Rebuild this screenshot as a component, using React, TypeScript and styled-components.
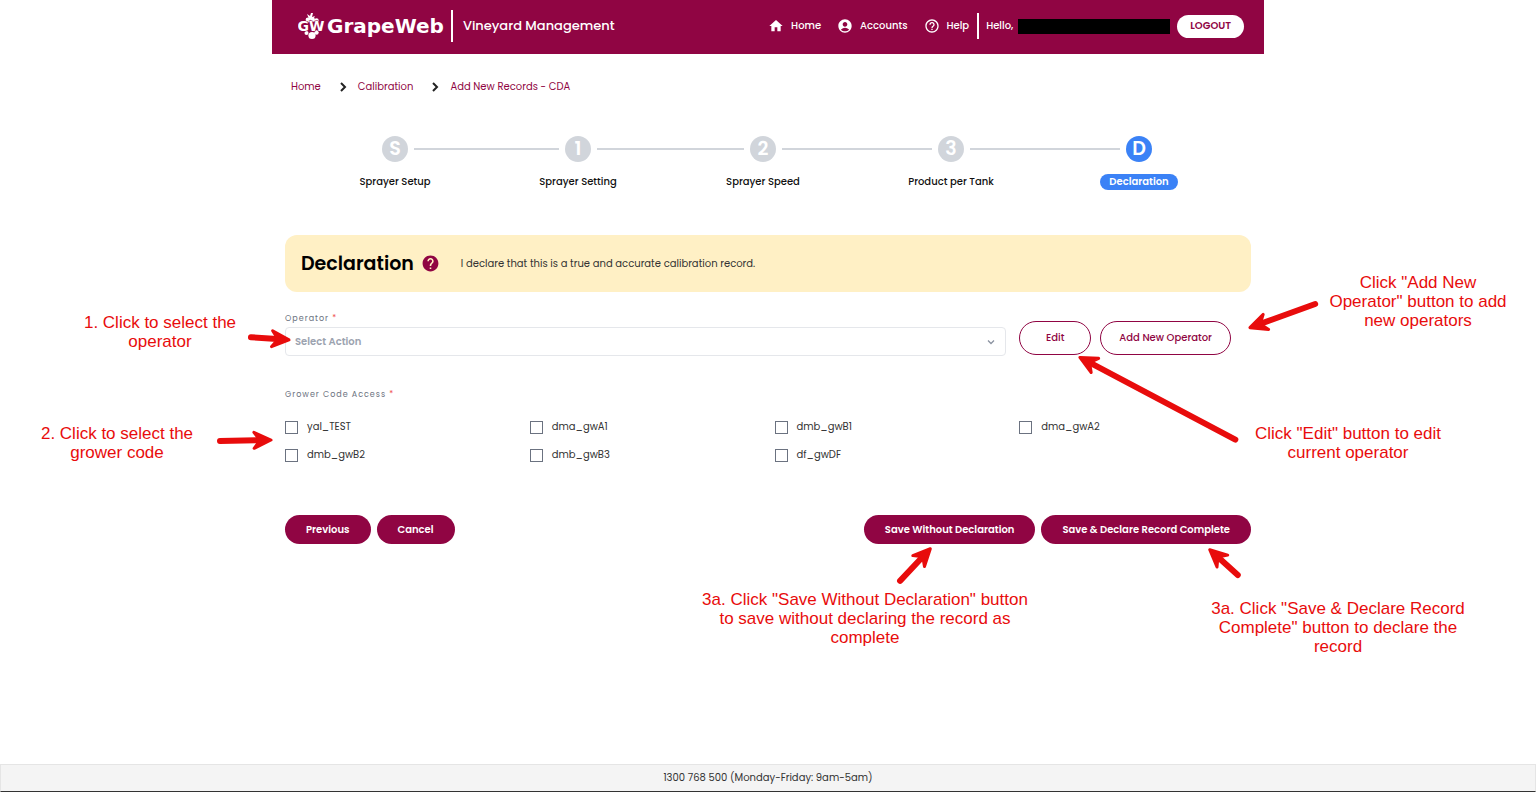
import React from "react";
import styled, { createGlobalStyle } from "styled-components";
import { MdAccountCircle, MdHelp, MdHelpOutline, MdHome } from "react-icons/md";

const wine = "#900543";
const blue = "#3b82f6";
const grey = "#d1d5db";
const red = "#e80c0c";

const GlobalStyle = createGlobalStyle`
  *, *::before, *::after { box-sizing: border-box; }
  body {
    margin: 0;
    background: #fff;
    color: #333;
    font-family: Poppins, Inter, "Liberation Sans", sans-serif;
    font-size: 10px;
    line-height: 16px;
  }
  button, input, select { font: inherit; }
  h1, p, ol { margin: 0; padding: 0; }
  ol { list-style: none; }
`;

const Page = styled.div`
  min-height: 100vh;
  display: flex;
  flex-direction: column;
  overflow-x: hidden;
`;

const Shell = styled.div`
  position: relative;
  flex: 1;
  width: 100%;
  max-width: 992px;
  margin: 0 auto;
`;

const Header = styled.header`
  display: flex;
  align-items: center;
  justify-content: space-between;
  min-height: 54px;
  padding: 0 20px 2px 26px;
  background: ${wine};
  color: #fff;
`;

const Brand = styled.a`
  display: flex;
  align-items: center;
  color: inherit;
  text-decoration: none;
`;

const BrandName = styled.span`
  margin-left: 1px;
  font-family: "DejaVu Sans", Verdana, sans-serif;
  font-size: 20px;
  font-weight: 700;
  line-height: 32px;
`;

const Product = styled.span`
  margin-left: 7px;
  padding-left: 10px;
  border-left: 2px solid #fff;
  font-size: 13px;
  font-weight: 500;
  line-height: 32px;
`;

const Nav = styled.nav`
  display: flex;
  align-items: center;
`;

const NavLink = styled.a`
  display: flex;
  align-items: center;
  gap: 7px;
  margin-right: 16px;
  color: inherit;
  font-weight: 500;
  text-decoration: none;

  &:last-of-type { margin-right: 8px; }
`;

const Greeting = styled.span`
  padding-left: 7px;
  border-left: 2px solid #fff;
  font-weight: 500;
  line-height: 26px;
`;

const HiddenName = styled.span`
  width: 152px;
  height: 15px;
  margin: 0 7px 0 5px;
  background: #000;
`;

const Logout = styled.button`
  height: 23px;
  padding: 0 13px;
  border: 0;
  border-radius: 12px;
  background: #fff;
  color: ${wine};
  font-weight: 600;
`;

const Breadcrumbs = styled.nav`
  display: flex;
  align-items: center;
  gap: 11px;
  padding: 25px 19px 0;

  a { color: ${wine}; text-decoration: none; }
  svg { margin-left: 7px; }
`;

const Steps = styled.ol`
  display: flex;
  padding: 41px 112px 0 110px;
`;

const Step = styled.li`
  display: flex;
  flex-direction: column;
  align-items: center;
  gap: 12px;
  width: 26px;
`;

const StepMark = styled.span<{ $active?: boolean }>`
  width: 26px;
  height: 26px;
  border-radius: 13px;
  background: ${(p) => (p.$active ? blue : grey)};
  color: #fff;
  font-size: 19px;
  font-weight: 600;
  line-height: 26px;
  text-align: center;
`;

const StepLabel = styled.span<{ $active?: boolean }>`
  padding: 0 9px;
  border-radius: 8px;
  background: ${(p) => (p.$active ? blue : "transparent")};
  color: ${(p) => (p.$active ? "#fff" : "#111")};
  font-weight: ${(p) => (p.$active ? 600 : 500)};
  white-space: nowrap;
`;

const Connector = styled.li<{ $grow: number }>`
  flex: ${(p) => p.$grow} 1 0;
  height: 2px;
  margin: 12px 6px 0;
  background: ${grey};
`;

const Form = styled.form`
  padding: 0 13px;
`;

const Banner = styled.section`
  display: flex;
  align-items: center;
  min-height: 57px;
  margin-top: 45px;
  padding: 0 16px;
  border-radius: 12px;
  background: #fff0c5;
`;

const Title = styled.h1`
  color: #000;
  font-size: 19px;
  font-weight: 600;
  line-height: 28px;
`;

const HelpButton = styled.button`
  display: flex;
  margin: 0 21px 0 7px;
  padding: 0;
  border: 0;
  background: none;
  color: ${wine};
`;

const Columns = styled.div`
  display: grid;
  grid-template-columns: repeat(4, minmax(0, 1fr));
  gap: 12px 13px;
`;

const OperatorRow = styled(Columns)`
  margin-top: 21px;
`;

const Field = styled.div`
  grid-column: span 3;
`;

const caption = `
  display: block;
  padding: 0;
  color: #6b7280;
  font-size: 8px;
  letter-spacing: 1px;
  line-height: 12px;
`;

const FieldLabel = styled.label`
  ${caption}
  margin-bottom: 2px;
`;

const Required = styled.span`
  color: #f05252;
`;

const SelectBox = styled.div`
  position: relative;

  svg {
    position: absolute;
    top: 11px;
    right: 11px;
    pointer-events: none;
  }
`;

const Select = styled.select`
  display: block;
  appearance: none;
  width: 100%;
  height: 29px;
  padding: 0 9px;
  border: 1px solid #e5e7eb;
  border-radius: 4px;
  background: #fff;
  color: #9ca3af;
  font-weight: 600;
`;

const OperatorActions = styled.div`
  display: flex;
  align-items: center;
  gap: 9px;
  height: 44px;
  padding-top: 6px;
`;

const OutlineButton = styled.button`
  height: 34px;
  min-width: 72px;
  padding: 0 18px;
  border: 1px solid ${wine};
  border-radius: 17px;
  background: #fff;
  color: ${wine};
  font-weight: 500;
  white-space: nowrap;
`;

const Growers = styled.fieldset`
  margin: 32px 0 0;
  padding: 0;
  border: 0;

  legend { ${caption} margin-bottom: 18px; }
`;

const Grower = styled.label`
  display: flex;
  align-items: center;
  gap: 9px;
`;

const Checkbox = styled.input`
  appearance: none;
  width: 13px;
  height: 13px;
  margin: 0;
  border: 1px solid #6b7280;
  background: #fff;

  &:checked { background: ${wine}; }
`;

const Footer = styled.footer`
  padding: 5px;
  border: 1px solid #e5e5e5;
  border-bottom-color: #333;
  background: #f4f4f4;
  text-align: center;
`;

const Actions = styled.div`
  display: flex;
  gap: 6px;
  margin-top: 52px;
`;

const SolidButton = styled.button`
  height: 29px;
  padding: 0 21px;
  border: 0;
  border-radius: 15px;
  background: ${wine};
  color: #fff;
  font-weight: 600;
  white-space: nowrap;
`;

const Spacer = styled.span`
  flex: 1;
`;

const Arrows = styled.svg`
  position: absolute;
  top: 0;
  left: 0;
  overflow: visible;
  pointer-events: none;
`;

const Note = styled.p<{ $x: number; $y: number; $w: number }>`
  position: absolute;
  left: ${(p) => p.$x}px;
  top: ${(p) => p.$y}px;
  width: ${(p) => p.$w}px;
  color: ${red};
  font-family: "Liberation Sans", Arial, sans-serif;
  font-size: 17px;
  line-height: 19px;
  text-align: center;
  white-space: pre;
`;

function LogoMark() {
  return (
    <svg width="28" height="30" viewBox="0 0 28 30" fill="#fff" aria-hidden="true">
      <path d="M9 3l3 2 1-3 2 0-1 4 3-1-2 3h-4z" />
      <circle cx="10" cy="9" r="2.4" />
      <circle cx="14.5" cy="8.5" r="2.4" />
      <circle cx="18.5" cy="9.5" r="2.2" />
      <circle cx="8.5" cy="22" r="2" />
      <circle cx="18.5" cy="21.5" r="2.2" />
      <circle cx="14" cy="24.5" r="3.6" />
      <text
        x="13"
        y="20"
        fontFamily="DejaVu Sans, Verdana, sans-serif"
        fontSize="14"
        fontWeight="700"
        textAnchor="middle"
        stroke={wine}
        strokeWidth="1"
        paintOrder="stroke"
      >
        GW
      </text>
    </svg>
  );
}

function Chevron() {
  return (
    <svg width="8" height="10" viewBox="0 0 8 10" fill="none" stroke="#222" strokeWidth="2" aria-hidden="true">
      <path d="M2 1l4 4-4 4" />
    </svg>
  );
}

type ArrowProps = { from: [number, number]; to: [number, number] };

function Arrow({ from, to }: ArrowProps) {
  const dx = to[0] - from[0];
  const dy = to[1] - from[1];
  const length = Math.hypot(dx, dy);
  const angle = (Math.atan2(dy, dx) * 180) / Math.PI;
  return (
    <g
      transform={`translate(${to[0]} ${to[1]}) rotate(${angle})`}
      fill={red}
      stroke={red}
      strokeLinecap="round"
      strokeLinejoin="round"
    >
      <path d={`M${3 - length} 0H-9`} strokeWidth="6" />
      <path d="M-1 0L-18-8L-12 0L-18 8Z" strokeWidth="3" />
    </g>
  );
}

const steps = [
  { mark: "S", label: "Sprayer Setup", grow: 145 },
  { mark: "1", label: "Sprayer Setting", grow: 147 },
  { mark: "2", label: "Sprayer Speed", grow: 150 },
  { mark: "3", label: "Product per Tank", grow: 150 },
  { mark: "D", label: "Declaration", grow: 0 },
];

const growers = ["yal_TEST", "dma_gwA1", "dmb_gwB1", "dma_gwA2", "dmb_gwB2", "dmb_gwB3", "df_gwDF"];

const arrows: ArrowProps[] = [
  { from: [-24, 337], to: [18, 340] },
  { from: [-55, 441], to: [0, 440] },
  { from: [1046, 303], to: [977, 328] },
  { from: [966, 441], to: [807, 357] },
  { from: [626, 583], to: [659, 548] },
  { from: [968, 577], to: [937, 549] },
];

const notes = [
  { x: -198, y: 313, w: 172, text: "1. Click to select the\noperator" },
  { x: -241, y: 424, w: 172, text: "2. Click to select the\ngrower code" },
  { x: 1050, y: 273, w: 192, text: 'Click "Add New\nOperator" button to add\nnew operators' },
  { x: 976, y: 424, w: 200, text: 'Click "Edit" button to edit\ncurrent operator' },
  {
    x: 423,
    y: 590,
    w: 340,
    text: '3a. Click "Save Without Declaration" button\nto save without declaring the record as\ncomplete',
  },
  { x: 926, y: 599, w: 280, text: '3a. Click "Save & Declare Record\nComplete" button to declare the\nrecord' },
];

export default function App() {
  return (
    <Page>
      <GlobalStyle />
      <Shell>
        <Header>
          <Brand href="#">
            <LogoMark />
            <BrandName>GrapeWeb</BrandName>
            <Product>Vineyard Management</Product>
          </Brand>
          <Nav>
            <NavLink href="#"><MdHome size={16} />Home</NavLink>
            <NavLink href="#"><MdAccountCircle size={16} />Accounts</NavLink>
            <NavLink href="#"><MdHelpOutline size={16} />Help</NavLink>
            <Greeting>Hello,</Greeting>
            <HiddenName />
            <Logout type="button">LOGOUT</Logout>
          </Nav>
        </Header>

        <Breadcrumbs aria-label="Breadcrumb">
          <a href="#">Home</a>
          <Chevron />
          <a href="#">Calibration</a>
          <Chevron />
          <a href="#">Add New Records - CDA</a>
        </Breadcrumbs>

        <Steps>
          {steps.map(({ mark, label, grow }) => (
            <React.Fragment key={mark}>
              <Step>
                <StepMark $active={mark === "D"}>{mark}</StepMark>
                <StepLabel $active={mark === "D"}>{label}</StepLabel>
              </Step>
              {grow > 0 && <Connector $grow={grow} aria-hidden="true" />}
            </React.Fragment>
          ))}
        </Steps>

        <Form>
          <Banner>
            <Title>Declaration</Title>
            <HelpButton type="button" aria-label="Help"><MdHelp size={19} /></HelpButton>
            <p>I declare that this is a true and accurate calibration record.</p>
          </Banner>

          <OperatorRow>
            <Field>
              <FieldLabel htmlFor="operator">Operator <Required>*</Required></FieldLabel>
              <SelectBox>
                <Select id="operator">
                  <option>Select Action</option>
                </Select>
                <svg width="8" height="8" viewBox="0 0 8 8" fill="none" stroke="#8b93a1" aria-hidden="true">
                  <path d="M1 2.5l3 3 3-3" strokeWidth="1.3" />
                </svg>
              </SelectBox>
            </Field>
            <OperatorActions>
              <OutlineButton type="button">Edit</OutlineButton>
              <OutlineButton type="button">Add New Operator</OutlineButton>
            </OperatorActions>
          </OperatorRow>

          <Growers>
            <legend>Grower Code Access <Required>*</Required></legend>
            <Columns>
              {growers.map((code) => (
                <Grower key={code}>
                  <Checkbox type="checkbox" />
                  {code}
                </Grower>
              ))}
            </Columns>
          </Growers>

          <Actions>
            <SolidButton type="button">Previous</SolidButton>
            <SolidButton type="button">Cancel</SolidButton>
            <Spacer />
            <SolidButton type="button">Save Without Declaration</SolidButton>
            <SolidButton type="button">Save &amp; Declare Record Complete</SolidButton>
          </Actions>
        </Form>

        <Arrows width="1" height="1" aria-hidden="true">
          {arrows.map((arrow) => (
            <Arrow key={arrow.to.join()} {...arrow} />
          ))}
        </Arrows>
        {notes.map(({ x, y, w, text }) => (
          <Note key={text} $x={x} $y={y} $w={w}>{text}</Note>
        ))}
      </Shell>
      <Footer>1300 768 500 (Monday-Friday: 9am-5am)</Footer>
    </Page>
  );
}
